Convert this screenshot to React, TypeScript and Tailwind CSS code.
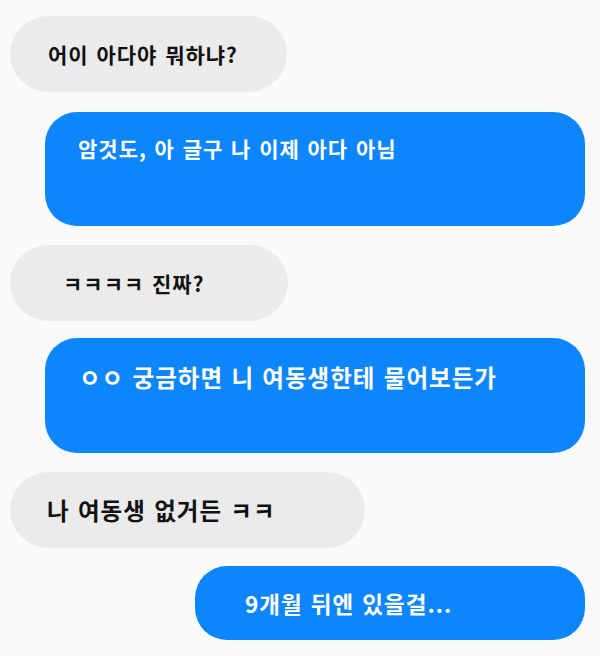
const font = { fontFamily: '"Noto Sans CJK KR", "Noto Sans", sans-serif' };

type Msg = {
	text: string;
	mine: boolean;
	className: string;
};

const messages: Msg[] = [
	{ text: "어이 아다야 뭐하냐?", mine: false, className: "text-[21px] mt-[16px] ml-[10px] w-[277px] h-[76px] pl-[38px] items-center" },
	{ text: "암것도, 아 글구 나 이제 아다 아님", mine: true, className: "text-[21px] mt-[20px] ml-[45px] w-[540px] h-[114px] pl-[33px] pt-[22px] items-start" },
	{ text: "ㅋㅋㅋㅋ 진짜?", mine: false, className: "text-[21px] mt-[19px] ml-[10px] w-[278px] h-[76px] pl-[53px] items-center" },
	{ text: "ㅇㅇ 궁금하면 니 여동생한테 물어보든가", mine: true, className: "text-[23.5px] mt-[17px] ml-[45px] w-[540px] h-[115px] pl-[34px] pt-[25px] items-start" },
	{ text: "나 여동생 없거든 ㅋㅋ", mine: false, className: "text-[23.5px] mt-[19px] ml-[10px] w-[355px] h-[76px] pl-[37px] items-center" },
	{ text: "9개월 뒤엔 있을걸...", mine: true, className: "text-[22.5px] mt-[18px] ml-[195px] w-[390px] h-[74px] pl-[50px] items-center" },
];

export default function App() {
	return (
		<div className="w-[600px] h-[656px] bg-[#fafafa] flex flex-col overflow-hidden" style={font}>
			{messages.map((m, i) => (
				<div
					key={i}
					className={
						"flex shrink-0 font-bold leading-[28px] tracking-[1px] [word-spacing:2px] " +
						(m.mine
							? "bg-[#0d85fb] text-white rounded-[32px] "
							: "bg-[#ebebeb] text-[#111] rounded-[38px] ") +
						m.className
					}
				>
					{m.text}
				</div>
			))}
		</div>
	);
}
